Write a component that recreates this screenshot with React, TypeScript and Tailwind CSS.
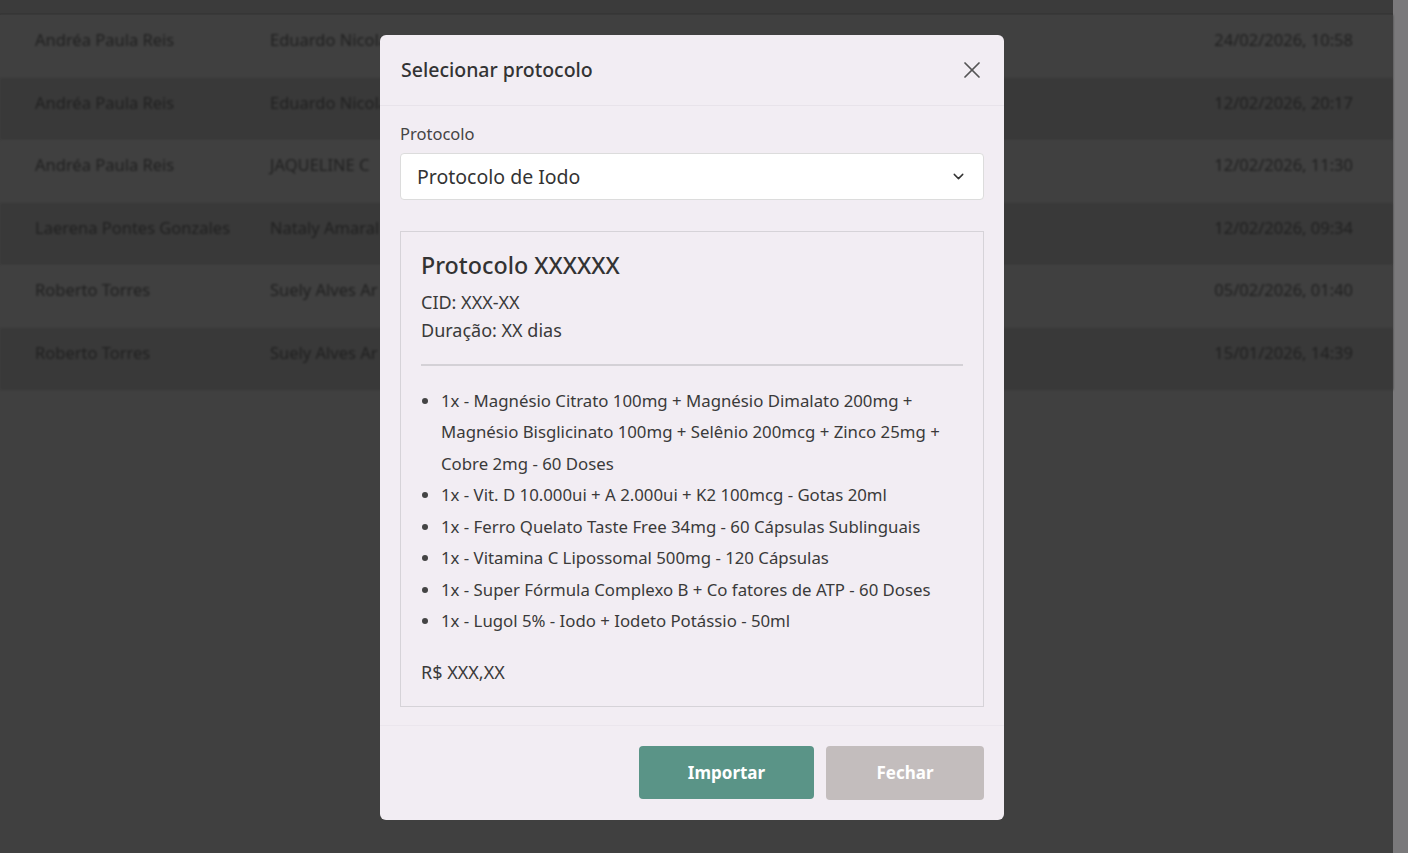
import { X, ChevronDown } from "lucide-react";

const rows = [
  { a: "Andréa Paula Reis", b: "Eduardo Nicolau", d: "24/02/2026, 10:58" },
  { a: "Andréa Paula Reis", b: "Eduardo Nicolau", d: "12/02/2026, 20:17" },
  { a: "Andréa Paula Reis", b: "JAQUELINE C", d: "12/02/2026, 11:30" },
  { a: "Laerena Pontes Gonzales", b: "Nataly Amaral", d: "12/02/2026, 09:34" },
  { a: "Roberto Torres", b: "Suely Alves Ar", d: "05/02/2026, 01:40" },
  { a: "Roberto Torres", b: "Suely Alves Ar", d: "15/01/2026, 14:39" },
];

const items = [
  "1x - Magnésio Citrato 100mg + Magnésio Dimalato 200mg + Magnésio Bisglicinato 100mg + Selênio 200mcg + Zinco 25mg + Cobre 2mg - 60 Doses",
  "1x - Vit. D 10.000ui + A 2.000ui + K2 100mcg - Gotas 20ml",
  "1x - Ferro Quelato Taste Free 34mg - 60 Cápsulas Sublinguais",
  "1x - Vitamina C Lipossomal 500mg - 120 Cápsulas",
  "1x - Super Fórmula Complexo B + Co fatores de ATP - 60 Doses",
  "1x - Lugol 5% - Iodo + Iodeto Potássio - 50ml",
];

export default function App() {
  return (
    <div
      className="relative flex h-screen w-full overflow-hidden bg-[#404040]"
      style={{ fontFamily: '"Noto Sans", sans-serif' }}
    >
      {/* ── Background table (dimmed) ── */}
      <div className="flex flex-1 flex-col">
        <div className="h-[13px] bg-[#3b3b3b]" />
        <div className="h-[2px] bg-[#363636]" />
        {rows.map((r, i) => (
          <div
            key={i}
            className={`flex h-[62.5px] items-start pt-[13px] text-[16.5px] text-[#202020] blur-[1.2px] ${
              i % 2 === 0 ? "bg-[#404040]" : "bg-[#393939]"
            }`}
          >
            <span className="w-[270px] pl-[35px]">{r.a}</span>
            <span className="flex-1">{r.b}</span>
            <span className="w-[220px] pr-[40px] text-right">{r.d}</span>
          </div>
        ))}
      </div>
      <div className="w-[15px] bg-[#7a797b]" />

      {/* ── Modal ── */}
      <div className="absolute left-[380px] top-[35px] flex h-[785px] w-[624px] flex-col rounded-md bg-[#f2edf3] text-[#3a3a3a]">
        <div className="flex h-[71px] items-center justify-between border-b border-[#e8e3ea] pl-[21px] pr-[18px]">
          <h2 className="text-[19.5px] font-medium text-[#333]">Selecionar protocolo</h2>
          <X size={28} strokeWidth={1.5} className="text-[#555]" />
        </div>

        <div className="flex flex-1 flex-col px-5 pt-[16px]">
          <label className="text-[16.5px] text-[#444]">Protocolo</label>
          <div className="mt-[6px] flex h-[47px] items-center justify-between rounded border border-[#dcdcdc] bg-white pl-4 pr-[16px]">
            <span className="text-[19.5px] text-[#333]">Protocolo de Iodo</span>
            <ChevronDown size={17} strokeWidth={2} className="text-[#333]" />
          </div>

          <div className="mt-[31px] border border-[#d6d3d8] px-5 pb-[20px] pt-[16px]">
            <h3 className="text-[23.3px] font-medium text-[#333]">Protocolo XXXXXX</h3>
            <p className="mt-[5px] text-[18px] leading-[28px]">CID: XXX-XX</p>
            <p className="text-[18px] leading-[28px]">Duração: XX dias</p>
            <hr className="mt-[20px] border-t-2 border-[#d4d1d6]" />
            <ul className="mt-[19px] list-disc pl-5 text-[16.8px] leading-[31.5px] marker:text-[#444]">
              {items.map((t) => (
                <li key={t}>{t}</li>
              ))}
            </ul>
            <p className="mt-[22px] text-[18px]">R$ XXX,XX</p>
          </div>
        </div>

        <div className="flex justify-end gap-3 border-t border-[#ebe6ed] px-5 pb-5 pt-5">
          <button className="h-[53px] w-[175px] rounded bg-[#5a9487] text-[17px] font-bold text-white">
            Importar
          </button>
          <button className="h-[54px] w-[158px] rounded bg-[#c3bdbd] text-[17px] font-bold text-white">
            Fechar
          </button>
        </div>
      </div>
    </div>
  );
}
